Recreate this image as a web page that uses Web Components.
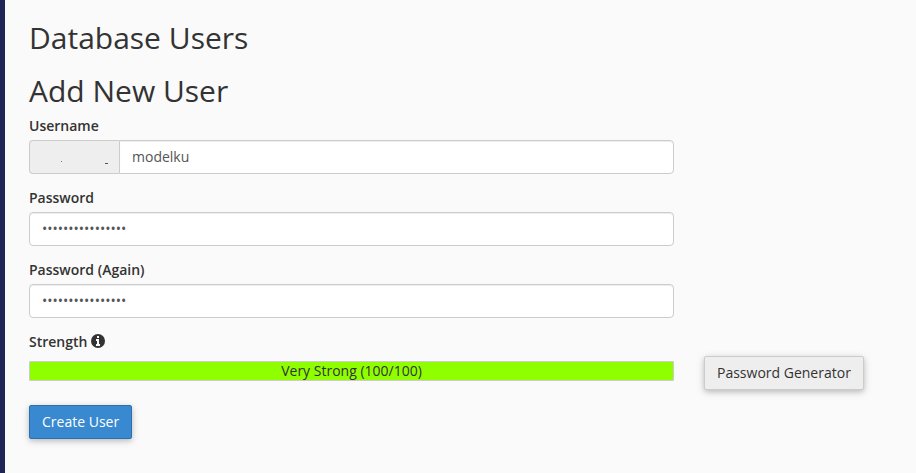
<!DOCTYPE html>
<html lang="en">
<head>
<meta charset="utf-8">
<meta name="viewport" content="width=device-width, initial-scale=1">
<title>Database Users</title>
<style>
  body {
    margin: 0;
    font: 14px/20px "Open Sans", sans-serif;
    color: #333;
    background-color: #fafafa;
  }
</style>
</head>
<body>
<database-users></database-users>

<script>
const define = (name, html, setup) => {
  const template = document.createElement('template');
  template.innerHTML = html;
  window.customElements.define(
    name,
    class extends HTMLElement {
      constructor() {
        super();
        this.attachShadow({ mode: 'open' });
        this.shadowRoot.appendChild(template.content.cloneNode(true));
      }

      connectedCallback() {
        if (setup) setup(this, this.shadowRoot);
      }
    },
  );
};

define(
  'form-field',
  `
<style>
  :host {
    display: block;
  }

  label {
    display: block;
    margin-bottom: 4px;
    font-weight: 600;
  }

  .group {
    display: flex;
  }

  input {
    flex: 1;
    min-width: 0;
    height: 34px;
    box-sizing: border-box;
    padding: 5px 12px 7px;
    border: 1px solid #ccc;
    border-radius: 4px;
    background-color: #fff;
    color: #555;
    font: inherit;
    box-shadow: inset 0 1px 1px rgba(0, 0, 0, 0.075);
  }

  ::slotted([slot='addon']) {
    border: 1px solid #ccc;
    border-right: 0;
    border-radius: 4px 0 0 4px;
  }

  :host([addon]) input {
    border-radius: 0 4px 4px 0;
  }
</style>
<label for="control"><slot name="label"></slot></label>
<div class="group">
  <slot name="addon"></slot>
  <input id="control">
</div>
`,
  (host, root) => {
    const input = root.querySelector('input');
    input.type = host.getAttribute('type') || 'text';
    input.value = host.getAttribute('value') || '';
  },
);

define(
  'user-prefix',
  `
<style>
  :host {
    display: flex;
    width: 89px;
    background-color: #eee;
  }

  svg {
    display: block;
    width: 100%;
    height: 32px;
  }
</style>
<svg viewBox="0 0 89 32" shape-rendering="crispEdges" aria-hidden="true">
  <path fill="#777" d="M31 20h1v1h-1z"/>
  <path fill="#555" d="M75 22h3v1h-3z"/>
</svg>
`,
);

define(
  'info-icon',
  `
<style>
  :host {
    display: inline-block;
    vertical-align: -1px;
  }

  svg {
    display: block;
    width: 14px;
    height: 14px;
  }
</style>
<svg viewBox="0 0 14 14" aria-hidden="true">
  <circle cx="7" cy="7" r="7" fill="#333"/>
  <path fill="#fafafa" d="M6 2h2v2H6zM5 5h3v5h1v2H5v-2h1V7H5z"/>
</svg>
`,
);

define(
  'strength-meter',
  `
<style>
  :host {
    display: block;
    box-sizing: border-box;
    height: 20px;
    border: 1px solid #ccc;
    border-radius: 1px;
    background-color: #fff;
  }

  .bar {
    height: 18px;
    background-color: #8fff00;
    line-height: 18px;
    text-align: center;
  }
</style>
<div class="bar"><slot></slot></div>
`,
  (host, root) => {
    root.querySelector('.bar').style.width = host.getAttribute('value') + '%';
  },
);

define(
  'action-button',
  `
<style>
  :host {
    display: inline-block;
  }

  button {
    display: block;
    padding: 6px 12px;
    border: 1px solid #ccc;
    border-radius: 2px;
    background-color: #eee;
    color: #333;
    font: inherit;
    white-space: nowrap;
    box-shadow: 0 2px 5px rgba(0, 0, 0, 0.16), 0 2px 10px rgba(0, 0, 0, 0.12);
    cursor: pointer;
  }

  :host([primary]) button {
    border-color: #2a70b0;
    background-color: #3889d0;
    color: #fff;
  }
</style>
<button type="button"><slot></slot></button>
`,
);

define(
  'database-users',
  `
<style>
  :host {
    display: block;
    box-sizing: border-box;
    min-height: 100vh;
    padding: 21px 17px 24px 24px;
    border-left: 5px solid #1f2555;
  }

  h1,
  h2 {
    margin: 0 0 20px;
    font-size: 30px;
    font-weight: 400;
    line-height: 33px;
  }

  h2 {
    margin-bottom: 9px;
  }

  .row {
    display: grid;
    grid-template-columns: repeat(4, 1fr);
    column-gap: 30px;
    align-items: start;
  }

  .wide {
    grid-column: span 3;
  }

  form-field {
    margin-bottom: 14px;
  }

  .strength-label {
    margin-bottom: 4px;
    font-weight: 600;
  }

  strength-meter {
    margin-top: 5px;
  }

  .submit {
    margin-top: 15px;
  }
</style>
<main>
  <h1>Database Users</h1>
  <h2>Add New User</h2>
  <form>
    <div class="row">
      <div class="wide">
        <form-field addon value="modelku">
          <span slot="label">Username</span>
          <user-prefix slot="addon"></user-prefix>
        </form-field>
        <form-field type="password" value="aaaaaaaaaaaaaaaa">
          <span slot="label">Password</span>
        </form-field>
        <form-field type="password" value="aaaaaaaaaaaaaaaa">
          <span slot="label">Password (Again)</span>
        </form-field>
      </div>
    </div>
    <div class="strength-label">Strength <info-icon></info-icon></div>
    <div class="row">
      <strength-meter class="wide" value="100">Very Strong (100/100)</strength-meter>
      <action-button>Password Generator</action-button>
    </div>
    <div class="submit">
      <action-button primary>Create User</action-button>
    </div>
  </form>
</main>
`,
);
</script>
</body>
</html>
